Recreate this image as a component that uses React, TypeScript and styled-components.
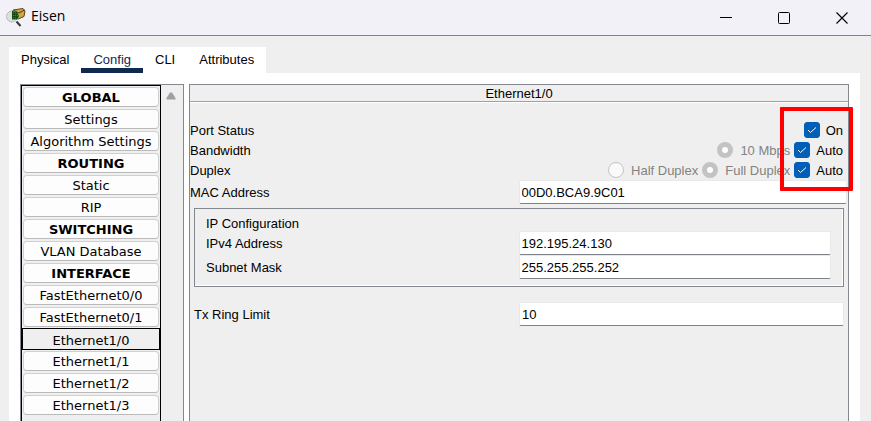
import React, { useState } from "react";
import styled, { createGlobalStyle, css } from "styled-components";

const GlobalStyle = createGlobalStyle`
  *, *::before, *::after { box-sizing: border-box; }
  html, body { margin: 0; height: 100%; overflow: hidden; }
  body { background: #efefef; color: #000; font: 13px/16px "Liberation Sans", Arial, sans-serif; }
  button, input { font: inherit; color: inherit; margin: 0; }
`;

const Window = styled.div`
  height: 100vh;
  display: flex;
  flex-direction: column;
`;

const TitleBar = styled.header`
  display: flex;
  align-items: center;
  flex: none;
  height: 36px;
  padding-left: 5px;
  background: #f2f1f8;
  border-bottom: 1px solid #80828a;
`;

const Title = styled.h1`
  flex: 1;
  margin: 0 0 0 4px;
  padding-bottom: 3px;
  font: 400 14px/20px "Open Sans", "Noto Sans", sans-serif;
`;

const CaptionButton = styled.button`
  display: grid;
  place-items: center;
  width: 58px;
  height: 32px;
  padding: 0 1px 0 0;
  border: 0;
  background: none;
`;

const Content = styled.div`
  flex: 1;
  min-height: 0;
  display: flex;
  flex-direction: column;
  align-items: flex-start;
  padding: 11px 11px 0 9px;
`;

const TabBar = styled.div`
  display: flex;
  height: 26px;
  background: #fff;
`;

const Tab = styled.button<{ $active: boolean }>`
  height: 26px;
  padding: 5px 12px 0;
  border: 0;
  border-bottom: 5px solid ${(p) => (p.$active ? "#10294f" : "#fff")};
  background: none;
  color: ${(p) => (p.$active ? "#10294f" : "#000")};
  line-height: 16px;
`;

const Page = styled.main`
  flex: 1;
  min-height: 0;
  align-self: stretch;
  display: flex;
  gap: 5px;
  padding: 11px 11px 0;
  background: #fff;
`;

const Sidebar = styled.div`
  flex: none;
  display: flex;
  width: 164px;
  border: 1px solid #828790;
  border-bottom: 0;
  background: #efefef;
`;

const NavList = styled.nav`
  flex: 1;
  display: flex;
  flex-direction: column;
  gap: 2px;
  padding: 1px;
  border: 1px solid #000;
  border-bottom: 0;
`;

const NavButton = styled.button<{ $heading: boolean; $selected: boolean }>`
  flex: none;
  height: 20px;
  padding: 2px 0 0;
  border: 1px solid #d0d0d0;
  border-bottom-color: #bababa;
  border-radius: 4px;
  background: #fdfdfd;
  font: ${(p) => (p.$heading ? 700 : 400)} 13px/16px "DejaVu Sans", Verdana, sans-serif;
  ${(p) =>
    p.$selected &&
    css`
      height: 22px;
      margin: -1px;
      padding-top: 3px;
      border-color: #000;
      border-radius: 0;
      background: #efefef;
    `}
`;

const ScrollButton = styled.button`
  display: grid;
  place-items: center;
  width: 22px;
  height: 21px;
  padding: 0 2px 0 0;
  border: 0;
  background: none;
`;

const Panel = styled.section`
  position: relative;
  flex: 1;
  min-width: 0;
  border: 1px solid #828790;
  border-bottom: 0;
  background: #efefef;
`;

const PanelTitle = styled.h2`
  margin: 0 0 18px;
  height: 17px;
  border-bottom: 1px solid #a0a0a0;
  box-shadow: 0 1px #fff;
  font-size: 13px;
  font-weight: 400;
  line-height: 17px;
  text-align: center;
`;

const OptionRow = styled.div`
  display: flex;
  align-items: center;
  justify-content: space-between;
  height: 20px;
  padding-right: 5px;
`;

const Caption = styled.span`
  padding-top: 2px;
`;

const Options = styled.div`
  display: flex;
  gap: 4px;
`;

const Choice = styled.label<{ $disabled?: boolean }>`
  display: flex;
  align-items: center;
  gap: ${(p) => (p.$disabled ? 7 : 6)}px;
  color: ${(p) => (p.$disabled ? "#838383" : "#000")};
`;

const CheckFrame = styled.span`
  display: grid;
  & > * { grid-area: 1 / 1; }
  & > svg { pointer-events: none; }
`;

const CheckInput = styled.input`
  appearance: none;
  width: 16px;
  height: 16px;
  border: 1px solid #868686;
  border-radius: 3px;
  background: #f5f5f5;
  &:checked { background: #005fb8; border-color: #005fb8; }
`;

const RadioInput = styled.input`
  appearance: none;
  width: 16px;
  height: 16px;
  border: 1px solid #c3c3c3;
  border-radius: 50%;
  background: #fafafa;
  &:checked { border-width: 5px; background: #fff; }
`;

const FieldRow = styled.div<{ $inset?: boolean }>`
  display: grid;
  grid-template-columns: 1fr 1fr;
  align-items: center;
  padding: ${(p) => (p.$inset ? "0 4px" : "0 1px 0 0")};
`;

const FieldLabel = styled.label`
  padding-top: 2px;
`;

const TextBox = styled.input`
  width: 100%;
  min-width: 0;
  height: 24px;
  padding: 0 2px;
  border: 1px solid #e9e9e9;
  border-bottom-color: #80828a;
  border-radius: 2px;
  background: #fff;
`;

const IpGroup = styled.fieldset`
  min-width: 0;
  margin: 4px 4px 15px;
  padding: 6px 12px 7px 11px;
  border: 1px solid #828790;
  box-shadow: inset -1px -1px #fff;
  & > ${FieldRow} { padding: 0; }
`;

const GroupTitle = styled.div`
  height: 16px;
  line-height: 18px;
`;

const Highlight = styled.div`
  position: absolute;
  top: 22px;
  right: -5px;
  width: 73px;
  height: 84px;
  border: 4px solid #fe0000;
  border-radius: 1px;
  pointer-events: none;
`;

const AppIcon = () => (
  <svg width="22" height="22" viewBox="0 0 22 22" aria-hidden="true">
    <path d="M8 3 18 1.5 20 4 19 9.5 13 12 9 10Z" fill="#d5a443" stroke="#5a451f" />
    <path d="M9 3.5 14 6 19.5 3" fill="none" stroke="#4c3817" />
    <circle cx="7" cy="9.5" r="5.5" fill="#dededc" stroke="#b9bbba" />
    <path d="M7 4 12 5 14 9 12 12.5 7 12.5Z" fill="#0f4f14" />
    <path d="M8 6h5M8 8.5h5M8 11h4" stroke="#2f9a33" strokeDasharray="1 1" />
    <path d="M11.5 14.5 15.5 19" stroke="#343639" strokeWidth="2" />
  </svg>
);

const navItems = [
  "GLOBAL", "Settings", "Algorithm Settings", "ROUTING", "Static", "RIP", "SWITCHING",
  "VLAN Database", "INTERFACE", "FastEthernet0/0", "FastEthernet0/1",
  "Ethernet1/0", "Ethernet1/1", "Ethernet1/2", "Ethernet1/3",
];
const headings = ["GLOBAL", "ROUTING", "SWITCHING", "INTERFACE"];
const tabs = ["Physical", "Config", "CLI", "Attributes"];

const Check = ({ label, name }: { label: string; name: string }) => (
  <Choice>
    <CheckFrame>
      <CheckInput type="checkbox" name={name} defaultChecked />
      <svg width="16" height="16" viewBox="0 0 16 16" aria-hidden="true">
        <path d="m4 8 2.5 2.5L12 5.5" fill="none" stroke="#fff" />
      </svg>
    </CheckFrame>
    <Caption>{label}</Caption>
  </Choice>
);

const Radio = ({ label, name, checked }: { label: string; name: string; checked?: boolean }) => (
  <Choice $disabled>
    <RadioInput type="radio" name={name} defaultChecked={checked} disabled />
    <Caption>{label}</Caption>
  </Choice>
);

const Field = ({ id, label, value, inset }: { id: string; label: string; value: string; inset?: boolean }) => (
  <FieldRow $inset={inset}>
    <FieldLabel htmlFor={id}>{label}</FieldLabel>
    <TextBox id={id} type="text" defaultValue={value} />
  </FieldRow>
);

export default function App() {
  const [tab, setTab] = useState("Config");
  const [selected, setSelected] = useState("Ethernet1/0");
  return (
    <Window>
      <GlobalStyle />
      <TitleBar>
        <AppIcon />
        <Title>Eisen</Title>
        <CaptionButton aria-label="Minimize">
          <svg width="12" height="12" viewBox="0 0 12 12"><path d="M0 5.5h12" stroke="#000" /></svg>
        </CaptionButton>
        <CaptionButton aria-label="Maximize">
          <svg width="12" height="12" viewBox="0 0 12 12"><rect x=".5" y=".5" width="11" height="11" rx="1" fill="none" stroke="#000" /></svg>
        </CaptionButton>
        <CaptionButton aria-label="Close">
          <svg width="12" height="12" viewBox="0 0 12 12"><path d="m.5.5 11 11M11.5.5l-11 11" stroke="#000" strokeWidth="1.2" /></svg>
        </CaptionButton>
      </TitleBar>
      <Content>
        <TabBar role="tablist">
          {tabs.map((t) => (
            <Tab key={t} role="tab" aria-selected={t === tab} $active={t === tab} onClick={() => setTab(t)}>{t}</Tab>
          ))}
        </TabBar>
        <Page>
          <Sidebar>
            <NavList>
              {navItems.map((n) => (
                <NavButton key={n} $heading={headings.includes(n)} $selected={n === selected} onClick={() => setSelected(n)}>{n}</NavButton>
              ))}
            </NavList>
            <ScrollButton aria-label="Scroll up">
              <svg width="10" height="8" viewBox="0 0 10 8"><path d="M4 0.5h2L9.5 6v1.5h-9V6Z" fill="#a0a0a0" /></svg>
            </ScrollButton>
          </Sidebar>
          <Panel>
            <PanelTitle>{selected}</PanelTitle>
            <OptionRow>
              <Caption>Port Status</Caption>
              <Options><Check label="On" name="port-status" /></Options>
            </OptionRow>
            <OptionRow>
              <Caption>Bandwidth</Caption>
              <Options>
                <Radio label="10 Mbps" name="bandwidth" checked />
                <Check label="Auto" name="bandwidth-auto" />
              </Options>
            </OptionRow>
            <OptionRow>
              <Caption>Duplex</Caption>
              <Options>
                <Radio label="Half Duplex" name="duplex" />
                <Radio label="Full Duplex" name="duplex" checked />
                <Check label="Auto" name="duplex-auto" />
              </Options>
            </OptionRow>
            <Field id="mac" label="MAC Address" value="00D0.BCA9.9C01" />
            <IpGroup aria-label="IP Configuration">
              <GroupTitle>IP Configuration</GroupTitle>
              <Field id="ipv4" label="IPv4 Address" value="192.195.24.130" />
              <Field id="mask" label="Subnet Mask" value="255.255.255.252" />
            </IpGroup>
            <Field id="tx" label="Tx Ring Limit" value="10" inset />
            <Highlight />
          </Panel>
        </Page>
      </Content>
    </Window>
  );
}
